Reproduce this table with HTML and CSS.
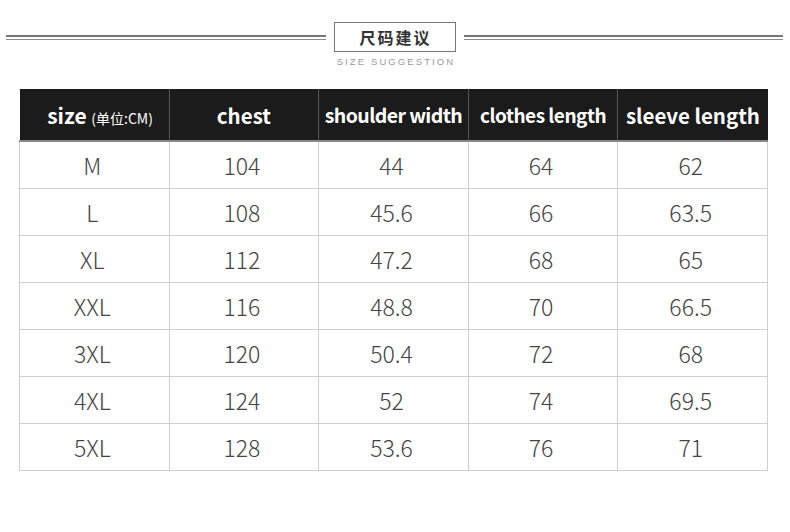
FILE: index.html
```html
<!DOCTYPE html>
<html>
<head>
<meta charset="utf-8">
<link rel="stylesheet" href="styles.css">
</head>
<body>
<div class="page">
  <div class="title-row">
    <div class="rule"></div>
    <div class="title-box">尺码建议</div>
    <div class="rule"></div>
  </div>
  <div class="subtitle">SIZE SUGGESTION</div>
  <table class="size-table">
    <thead>
      <tr>
        <th class="first"><span class="big">size</span> <span class="unit">(单位:CM)</span></th>
        <th>chest</th>
        <th class="tight">shoulder width</th>
        <th class="tighter">clothes length</th>
        <th>sleeve length</th>
      </tr>
    </thead>
    <tbody>
      <tr><td>M</td><td>104</td><td>44</td><td>64</td><td>62</td></tr>
      <tr><td>L</td><td>108</td><td>45.6</td><td>66</td><td>63.5</td></tr>
      <tr><td>XL</td><td>112</td><td>47.2</td><td>68</td><td>65</td></tr>
      <tr><td>XXL</td><td>116</td><td>48.8</td><td>70</td><td>66.5</td></tr>
      <tr><td>3XL</td><td>120</td><td>50.4</td><td>72</td><td>68</td></tr>
      <tr><td>4XL</td><td>124</td><td>52</td><td>74</td><td>69.5</td></tr>
      <tr><td>5XL</td><td>128</td><td>53.6</td><td>76</td><td>71</td></tr>
    </tbody>
  </table>
</div>
</body>
</html>
```
FILE: styles.css
```css
html, body {
  margin: 0;
  padding: 0;
  background: #fff;
}
.page {
  width: 790px;
  height: 532px;
  font-family: "Noto Sans CJK SC", "Noto Sans", sans-serif;
}
.title-row {
  display: flex;
  align-items: center;
  padding: 22px 7px 0 6px;
  gap: 8px;
}
.rule {
  flex: 1;
  border-bottom: 1px solid #8a8a8a;
  border-top: 2px solid #777;
  box-sizing: content-box;
  height: 2px;
}
.title-box {
  width: 118px;
  height: 28px;
  border: 1px solid #777;
  display: flex;
  align-items: center;
  justify-content: center;
  font-size: 16px;
  font-weight: bold;
  color: #333;
  letter-spacing: 2px;
  padding-left: 2px;
  box-sizing: content-box;
}
.subtitle {
  text-align: center;
  font-family: "Liberation Sans", sans-serif;
  font-size: 9.5px;
  letter-spacing: 2.1px;
  color: #9a9a9a;
  margin-top: 4px;
  padding-left: 2px;
}
.size-table {
  margin: 22px 0 0 19px;
  border-collapse: collapse;
  width: 749px;
  table-layout: fixed;
}
.size-table th {
  background: #1b1b1b;
  color: #fff;
  font-weight: bold;
  font-size: 20.5px;
  height: 51px;
  padding: 0;
  border-left: 1px solid #555;
  border-bottom: 2px solid #888;
  white-space: nowrap;
  letter-spacing: 0;
}
.size-table th.first {
  border-left: none;
  padding-left: 12px;
}
.size-table th.tight {
  font-size: 19.5px;
  letter-spacing: -0.6px;
}
.size-table th.tighter {
  font-size: 19px;
  letter-spacing: -0.5px;
}
.size-table th .big {
  font-size: 21px;
}
.size-table th .unit {
  font-size: 14px;
  font-weight: normal;
  letter-spacing: 0;
}
.size-table td {
  text-align: center;
  font-size: 23px;
  font-weight: 300;
  color: #444;
  height: 46px;
  padding: 0 4px 0 0;
  border: 1px solid #cfcfcf;
}
```
